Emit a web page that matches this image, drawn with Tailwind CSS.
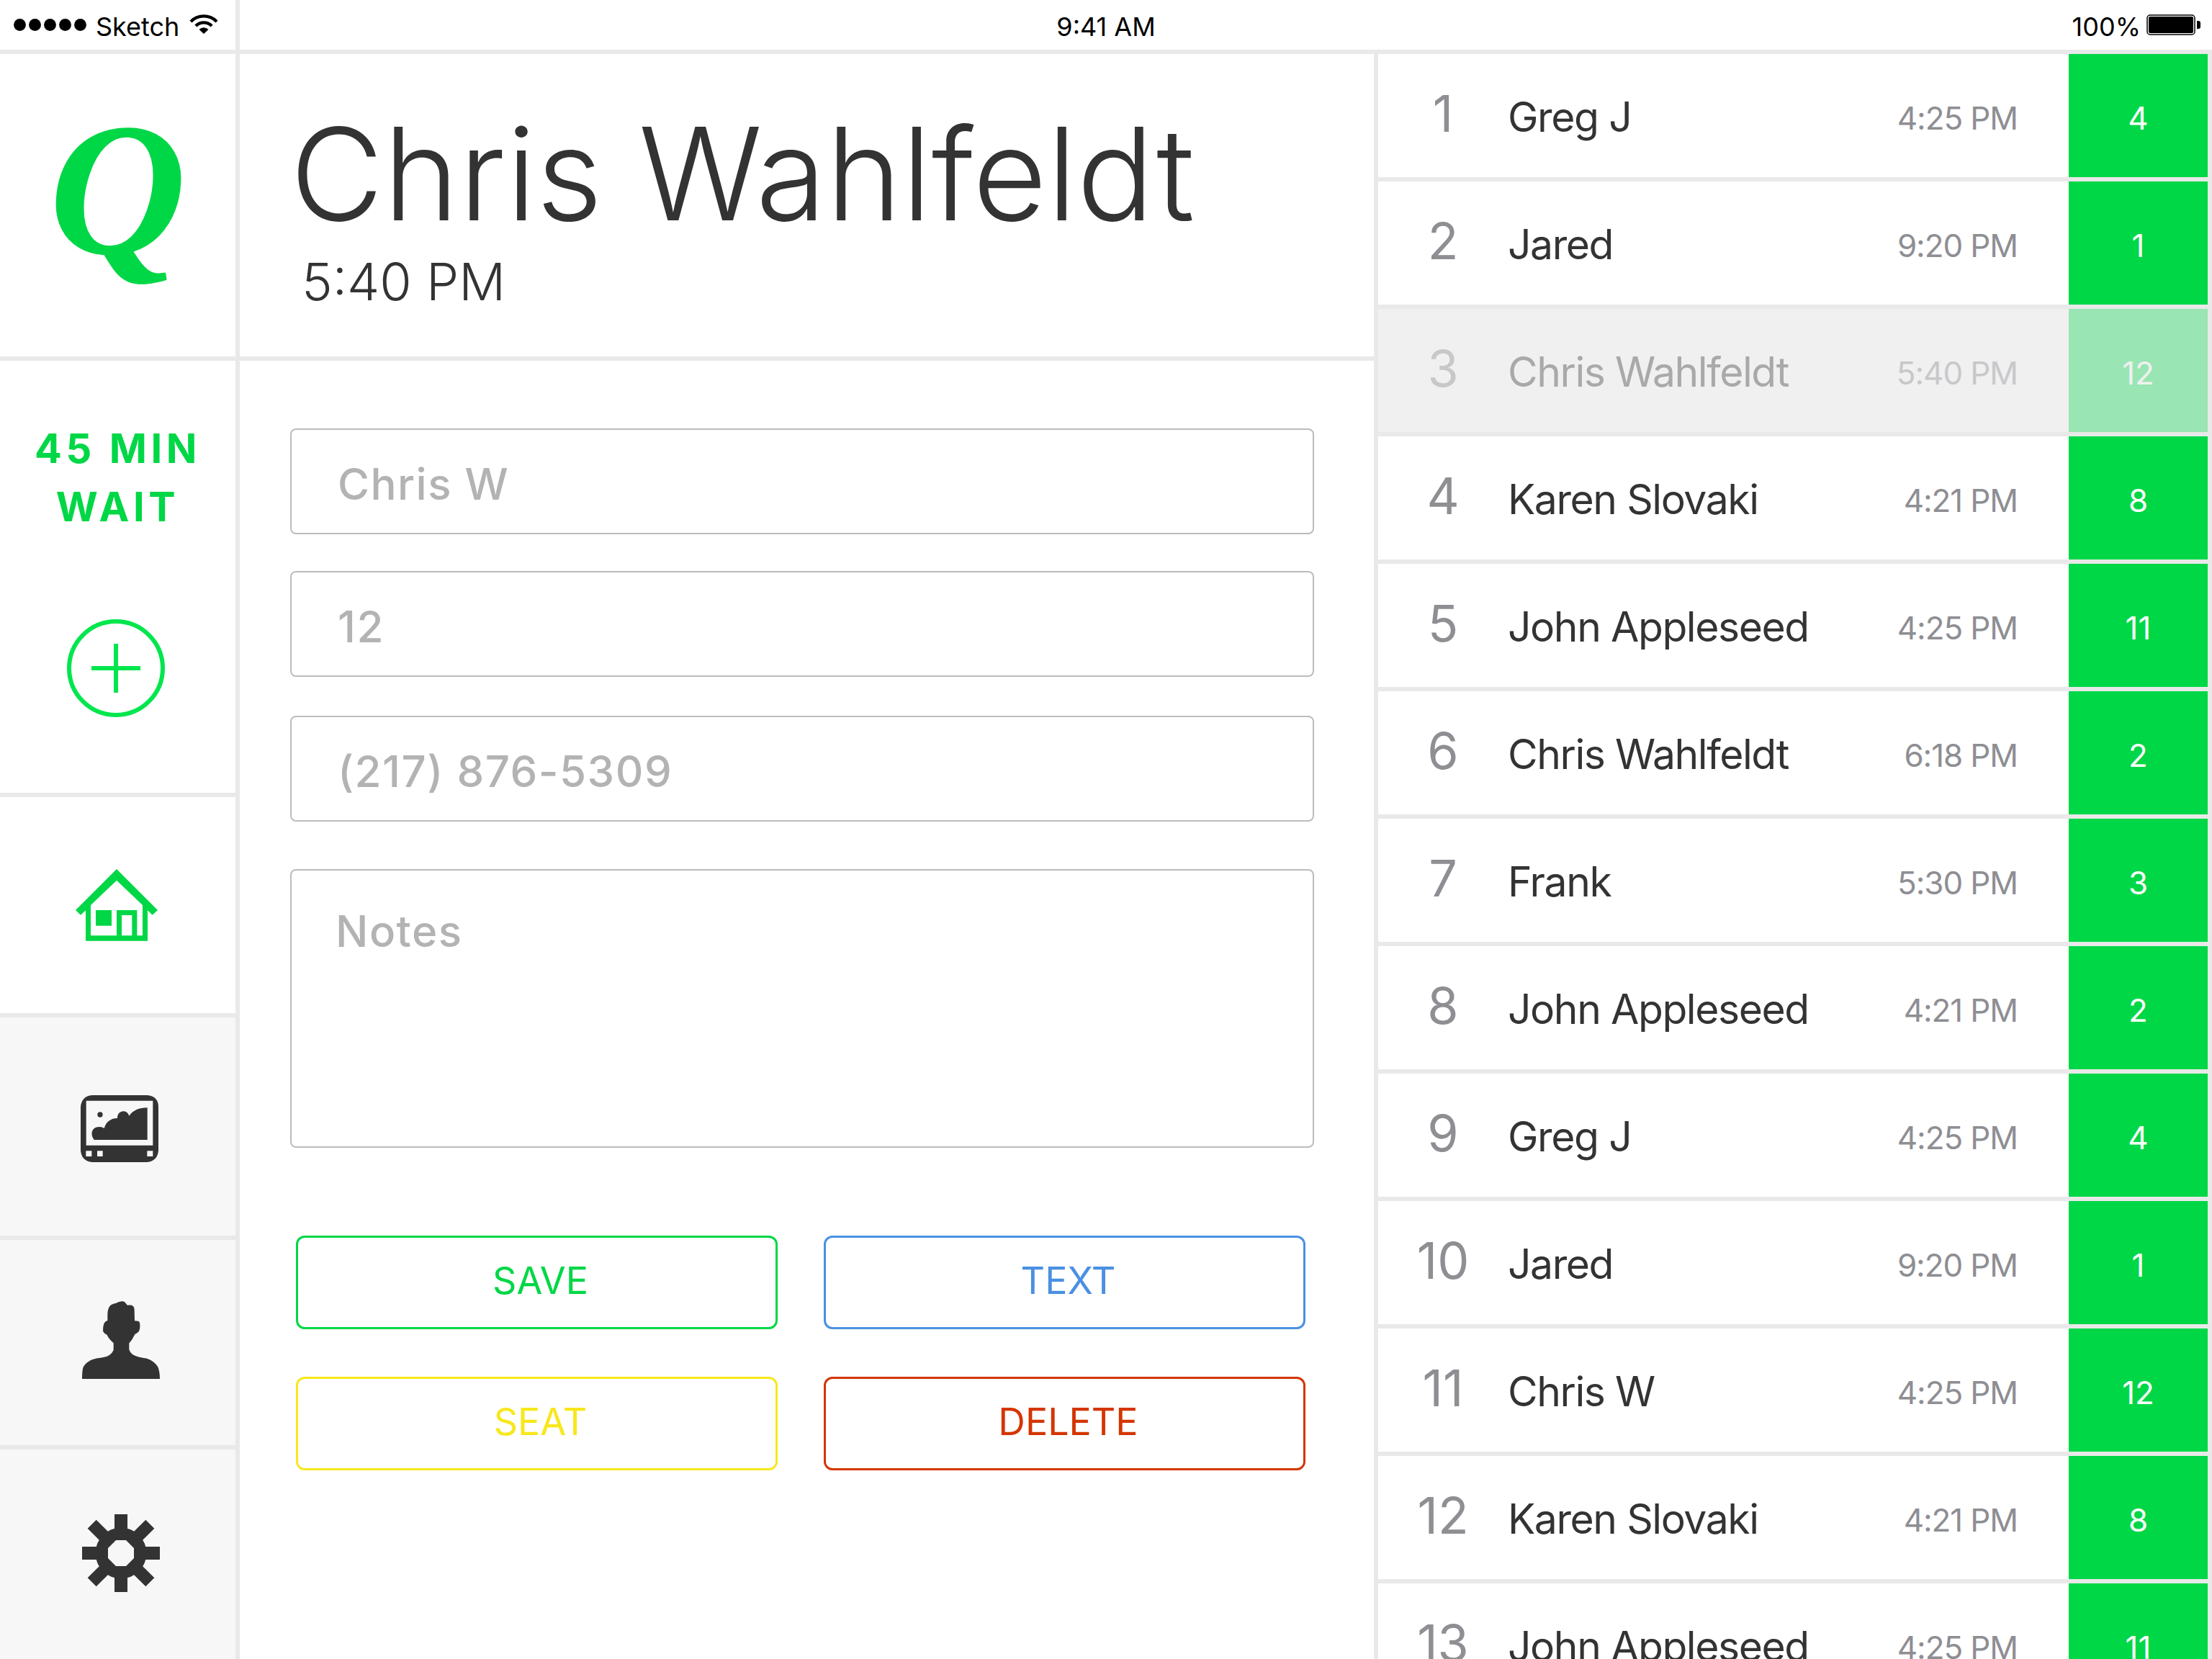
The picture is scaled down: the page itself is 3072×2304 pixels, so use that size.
<!DOCTYPE html>
<html lang="en">
<head>
<meta charset="utf-8">
<meta name="viewport" content="width=device-width, initial-scale=1">
<title>Waitlist</title>
<script src="https://cdn.jsdelivr.net/npm/@tailwindcss/browser@4"></script>
</head>
<body class="flex h-screen flex-col overflow-hidden bg-white font-['Inter',sans-serif] text-[#333333]">

<!-- Status bar -->
<header class="grid h-[75px] shrink-0 grid-cols-[1fr_auto_1fr] border-b-6 border-[#e9e9e9] text-[36px] leading-[44px] text-black">
  <div class="flex h-full w-[333px] items-center border-r-6 border-[#e9e9e9] pl-[19px]">
    <svg class="h-[17px] w-[102px]" viewBox="0 0 102 17" aria-hidden="true"><circle cx="8.5" cy="8.5" r="8.4"/><circle cx="29.5" cy="8.5" r="8.4"/><circle cx="50.5" cy="8.5" r="8.4"/><circle cx="71.5" cy="8.5" r="8.4"/><circle cx="92.5" cy="8.5" r="8.4"/></svg>
    <span class="ml-3 pt-1">Sketch</span>
    <svg class="ml-3.5 mb-1 h-7 w-10" viewBox="0 0 40 28" aria-hidden="true">
      <path d="M0.5 9.5A27 27 0 0 1 39.500 9.500L36.600 12.400A23.500 23.500 0 0 0 3.400 12.400Z"/>
      <path d="M7.300 15.500A18 18 0 0 1 32.700 15.500L29.600 18.500A13.600 13.600 0 0 0 10.400 18.500Z"/>
      <path d="M13.500 22A9.300 9.300 0 0 1 26.500 22L20 28Z"/>
    </svg>
  </div>
  <div class="flex items-center pt-1">9:41 AM</div>
  <div class="flex items-center justify-end gap-2 pr-4">
    <span class="pt-1">100%</span>
    <svg class="h-[30px] w-[75px]" viewBox="0 0 75 30" aria-hidden="true"><rect x="1" y="1" width="66" height="27" rx="4" fill="none" stroke="#000" stroke-width="1.500"/><rect x="3" y="3" width="62" height="23" rx="2"/><path d="M70 9h2a3 3 0 0 1 3 3v5a3 3 0 0 1-3 3h-2z"/></svg>
  </div>
</header>

<div class="grid min-h-0 flex-1 grid-cols-[333px_1575fr_1164fr]">

  <!-- Sidebar -->
  <aside class="flex flex-col border-r-6 border-[#e9e9e9]">
    <div class="flex h-[426px] shrink-0 items-center justify-center border-b-6 border-[#e9e9e9]">
      <span class="pb-11 font-['Liberation_Serif',serif] text-[264px] leading-[264px] font-bold text-[#00d746] italic">Q</span>
    </div>
    <div class="flex h-[606px] shrink-0 flex-col items-center border-b-6 border-[#e9e9e9] pt-[82px]">
      <p class="text-center text-[56px] leading-[81px] font-bold tracking-widest text-[#00d746]">45 MIN<br>WAIT</p>
      <button type="button" aria-label="Add party" class="mt-[115px] mr-1.5">
        <svg class="size-[136px]" viewBox="0 0 136 136" fill="none" stroke="#00e64d" stroke-width="6"><circle cx="68" cy="68" r="65"/><path d="M68 34v68M34 68h68"/></svg>
      </button>
    </div>
    <nav class="flex flex-1 flex-col">
      <a href="#home" aria-label="Home" class="flex h-[306px] items-center justify-center border-b-6 border-[#e9e9e9] pr-1">
        <svg class="h-[100px] w-[114px]" viewBox="0 0 342 300" fill="#00d746"><path fill-rule="evenodd" d="M171 0L342 171L320 191L300 172V299H42V172L21 191L0 171ZM171 47L63 150V277H171V171H256V277H279V150ZM192 192V277H235V192Z"/><path d="M84 171h66v65H84z"/></svg>
      </a>
      <a href="#display" aria-label="Display" class="flex h-[309px] items-center justify-center border-b-6 border-[#e9e9e9] bg-[#f7f7f7] pt-1.5 pl-1">
        <svg class="h-[93px] w-[108px]" viewBox="0 0 324 279" fill="#333"><path fill-rule="evenodd" d="M48 0H276Q324 4 324 48V231Q320 275 276 279H48Q4 275 0 231V48Q4 4 48 0ZM23 23V209H301V23ZM22 232V255H46V232ZM69 232V255H92V232ZM277 232V255H301V232Z"/><circle cx="81" cy="81" r="11"/><path d="M57 186C39 166 44 130 80 132Q90 132 98 138C106 108 130 95 153 96C151 64 192 54 202 86Q226 52 278 52V186Z"/></svg>
      </a>
      <a href="#guests" aria-label="Guests" class="flex h-[291px] items-center justify-center border-b-6 border-[#e9e9e9] bg-[#f7f7f7] pb-2 pl-2">
        <svg class="size-[108px]" viewBox="0 0 324 281" preserveAspectRatio="none" fill="#333"><path d="M0 281Q0 249 5 238C18 220 38 211 60 207C88 203 120 202 131 176V151Q113 139 103 121Q88 116 87 106Q87 72 106 70V52C106 20 118 11 140 8C156 1 172-3 180 6L189 15C206 13 218 15 218 34L219 71Q238 71 239 76Q242 82 241 93C240 112 231 114 220 120Q211 138 196 152V174C204 200 242 202 268 207C290 213 305 223 316 238Q324 255 324 281Z"/></svg>
      </a>
      <a href="#settings" aria-label="Settings" class="flex flex-1 items-center justify-center bg-[#f7f7f7] pb-1 pl-2">
        <svg class="size-[108px]" viewBox="-54 -54 108 108" fill="#333"><path fill-rule="evenodd" d="M-35.500 0A35.500 35.500 0 0 1 35.500 0A35.500 35.500 0 0 1-35.500 0ZM-7-18L-18-7V7L-7 18H7L18 7V-7L7-18Z"/><path d="M-9-54H9V-30H-9ZM-9 54H9V30H-9ZM-54-9V9H-30V-9ZM54-9V9H30V-9Z"/><path d="M-8.500-57H8.500V-30H-8.500ZM-8.500 57H8.500V30H-8.500ZM-57-8.500V8.500H-30V-8.500ZM57-8.500V8.500H30V-8.500Z" transform="rotate(45)"/></svg>
      </a>
    </nav>
  </aside>

  <!-- Selected party -->
  <main class="flex flex-col">
    <div class="h-[426px] shrink-0 border-b-6 border-[#e9e9e9] pt-[60px] pl-[70px]">
      <h1 class="text-[178px] leading-[214px] font-light whitespace-nowrap">Chris Wahlfeldt</h1>
      <p class="pl-4 text-[72px] leading-[84px] font-light">5:40 PM</p>
    </div>
    <form class="flex flex-col pt-[94px] pr-[83px] pl-[70px] text-[60px] font-medium">
      <input type="text" aria-label="Name" value="Chris W" class="h-[147px] rounded-lg border-2 border-[#bcbcbc] px-16 pt-1.5 tracking-wide text-[#b3b3b3]">
      <input type="text" aria-label="Party size" value="12" class="mt-[51px] h-[147px] rounded-lg border-2 border-[#bcbcbc] px-16 pt-1.5 tracking-wide text-[#b3b3b3]">
      <input type="tel" aria-label="Phone" value="(217) 876-5309" class="mt-[54px] h-[147px] rounded-lg border-2 border-[#bcbcbc] px-16 pt-1.5 tracking-wide text-[#b3b3b3]">
      <textarea aria-label="Notes" placeholder="Notes" class="mt-[66px] h-[387px] resize-none rounded-lg border-2 border-[#bcbcbc] px-[61px] pt-[46px] leading-[76px] tracking-wide text-[#b3b3b3] placeholder:text-[#b3b3b3]"></textarea>
      <div class="mt-[122px] mr-3 ml-2 grid grid-cols-2 gap-x-16 gap-y-[66px] text-[52px] font-normal">
        <button type="button" class="h-[130px] rounded-xl border-3 border-[#00d746] pb-1 pl-2.5 text-[#00d746]">SAVE</button>
        <button type="button" class="h-[130px] rounded-xl border-3 border-[#4a90e2] pb-1 pl-2.5 text-[#4a90e2]">TEXT</button>
        <button type="button" class="h-[130px] rounded-xl border-3 border-[#f8e71c] pb-1 pl-2.5 text-[#f8e71c]">SEAT</button>
        <button type="button" class="h-[130px] rounded-xl border-3 border-[#d43500] pb-1 pl-2.5 text-[#d43500]">DELETE</button>
      </div>
    </form>
  </main>

  <!-- Queue -->
  <section class="min-h-0 overflow-hidden border-x-6 border-[#e9e9e9]" aria-label="Queue">
    <table class="w-full table-fixed border-separate border-spacing-0 [&_td]:h-[177px] [&_td]:border-b-6 [&_td]:border-[#e9e9e9] [&_td]:whitespace-nowrap [&_td:nth-child(1)]:pb-1.5 [&_td:nth-child(1)]:text-center [&_td:nth-child(1)]:text-[70px] [&_td:nth-child(1)]:text-[#8e8e93] [&_td:nth-child(2)]:pt-1 [&_td:nth-child(2)]:text-[57px] [&_td:nth-child(2)]:tracking-tight [&_td:nth-child(3)]:pt-1.5 [&_td:nth-child(3)]:pr-[71px] [&_td:nth-child(3)]:text-right [&_td:nth-child(3)]:text-[44px] [&_td:nth-child(3)]:tracking-tight [&_td:nth-child(3)]:text-[#8e8e93] [&_td:nth-child(4)]:bg-[#00d746] [&_td:nth-child(4)]:pt-1.5 [&_td:nth-child(4)]:text-center [&_td:nth-child(4)]:text-[44px] [&_td:nth-child(4)]:text-white">
      <colgroup><col class="w-[180px]"><col><col class="w-[280px]"><col class="w-[193px]"></colgroup>
      <tbody>
        <tr><td>1</td><td>Greg J</td><td>4:25 PM</td><td>4</td></tr>
        <tr><td>2</td><td>Jared</td><td>9:20 PM</td><td>1</td></tr>
        <tr aria-selected="true" class="bg-[#f0f0f0]"><td class="text-[#c8c8ca]!">3</td><td class="text-[#a9a9a9]">Chris Wahlfeldt</td><td class="text-[#c8c8ca]!">5:40 PM</td><td class="bg-[#99e5b3]! text-[#f0f0f0]!">12</td></tr>
        <tr><td>4</td><td>Karen Slovaki</td><td>4:21 PM</td><td>8</td></tr>
        <tr><td>5</td><td>John Appleseed</td><td>4:25 PM</td><td>11</td></tr>
        <tr><td>6</td><td>Chris Wahlfeldt</td><td>6:18 PM</td><td>2</td></tr>
        <tr><td>7</td><td>Frank</td><td>5:30 PM</td><td>3</td></tr>
        <tr><td>8</td><td>John Appleseed</td><td>4:21 PM</td><td>2</td></tr>
        <tr><td>9</td><td>Greg J</td><td>4:25 PM</td><td>4</td></tr>
        <tr><td>10</td><td>Jared</td><td>9:20 PM</td><td>1</td></tr>
        <tr><td>11</td><td>Chris W</td><td>4:25 PM</td><td>12</td></tr>
        <tr><td>12</td><td>Karen Slovaki</td><td>4:21 PM</td><td>8</td></tr>
        <tr><td>13</td><td>John Appleseed</td><td>4:25 PM</td><td>11</td></tr>
      </tbody>
    </table>
  </section>
</div>
</body>
</html>
